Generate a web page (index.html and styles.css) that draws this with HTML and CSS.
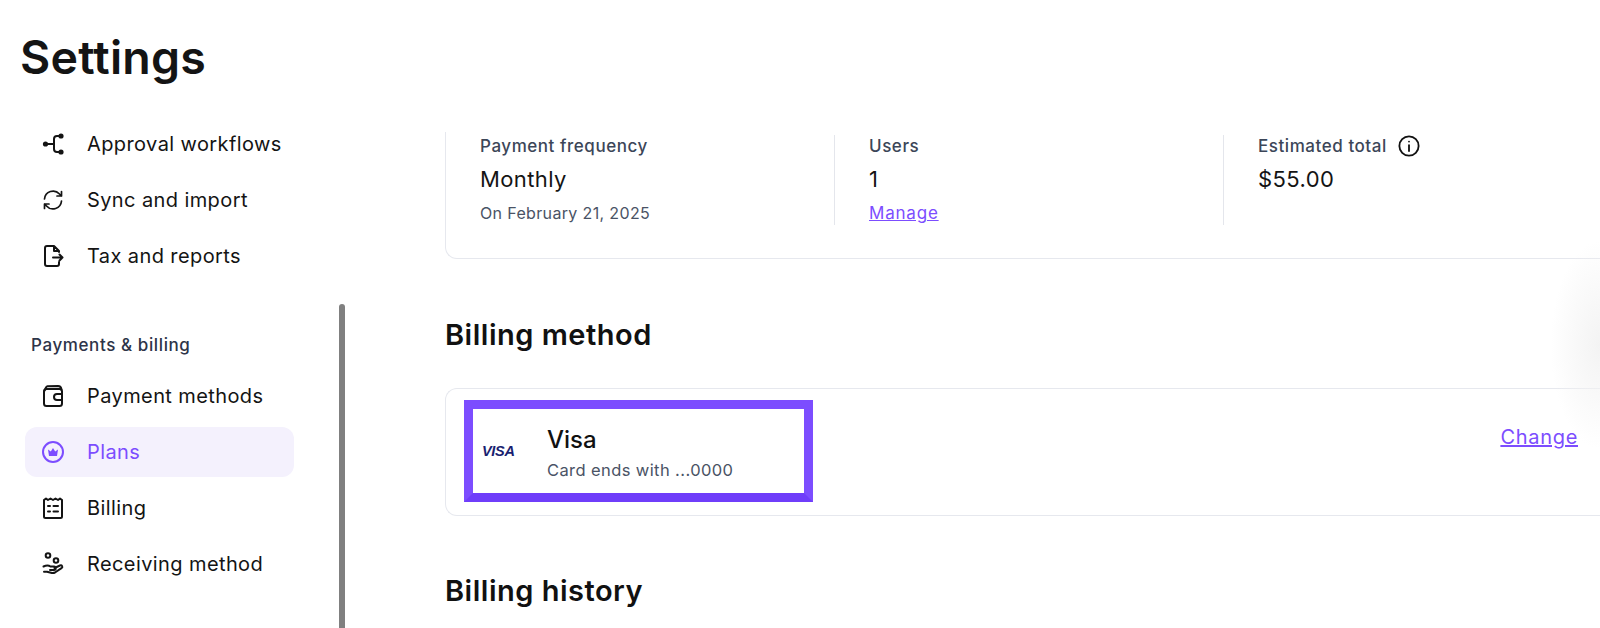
FILE: index.html
```html
<!DOCTYPE html>
<html lang="en">
<head>
  <meta charset="UTF-8" />
  <meta name="viewport" content="width=device-width, initial-scale=1.0"/>
  <title>Settings</title>
  <link rel="stylesheet" href="styles.css">
</head>
<body>
  <h1 class="page-title">Settings</h1>
  <div class="layout">
    <aside class="sidebar">
      <nav class="nav-group">
        <a class="nav-item">
          <svg class="nav-icon" viewBox="0 0 24 24"><circle cx="4.500" cy="12" r="2.600" class="solid"/><circle cx="20" cy="4" r="2.600" class="solid"/><circle cx="20" cy="20" r="2.600" class="solid"/><path d="M5 12h8M20 4h-4a3 3 0 0 0-3 3v10a3 3 0 0 0 3 3h4"/></svg>
          Approval workflows
        </a>
        <a class="nav-item">
          <svg class="nav-icon thin" viewBox="0 0 24 24"><path d="M3.500 11a8.600 8.600 0 0 1 15-5l2 2M20.500 3.500V8H16M20.500 13a8.600 8.600 0 0 1-15 5l-2-2M3.500 20.500V16H8"/></svg>
          Sync and import
        </a>
        <a class="nav-item">
          <svg class="nav-icon" viewBox="0 0 24 24"><path d="M18 8V7l-5-5H6a2 2 0 0 0-2 2v16a2 2 0 0 0 2 2h10a2 2 0 0 0 2-2v-2M13 2v5h5M12 13.500h9.500M18.500 10.500l3 3-3 3"/></svg>
          Tax and reports
        </a>
      </nav>

      <p class="nav-heading">Payments &amp; billing</p>
      <nav class="nav-group">
        <a class="nav-item">
          <svg class="nav-icon" viewBox="0 0 24 24"><rect x="3" y="5" width="18" height="17" rx="2.500"/><path d="M3.500 6.500 5 3.500q.3-1 1.500-1.200L17 2q3 0 3.500 3.500M21 10h-5a3 3 0 0 0 0 6h5"/></svg>
          Payment methods
        </a>
        <a class="nav-item active">
          <svg class="nav-icon" viewBox="0 0 24 24"><circle cx="12" cy="12" r="10"/><path class="solid" d="M7 9.500l2.800 2L12 8l2.200 3.500 2.800-2-1 6.500H8z"/></svg>
          Plans
        </a>
        <a class="nav-item">
          <svg class="nav-icon" viewBox="0 0 24 24"><path d="M3 4v16.500q0 1.500 1.500 1.500h15q1.500 0 1.500-1.500V4M3 4l2-1.500L7 4l2.500-1.500L12 4l2.500-1.500L17 4l2-1.500L21 4M7 10h2M7 15.500h2M12.500 10H17M12.500 15.500H17"/></svg>
          Billing
        </a>
        <a class="nav-item">
          <svg class="nav-icon" viewBox="0 0 24 24"><circle cx="7" cy="3.500" r="2.300"/><circle cx="15" cy="8.500" r="2.300"/><path d="M2.500 14.500c3-1.500 5-1.500 7 0h3.500a1.500 1.500 0 0 1 0 3.500H9M13.500 16l5.500-2.500c2-.7 3.200 1.500 1.500 2.700L14 20.500q-1.500.8-3 .5l-5-1.300H3"/></svg>
          Receiving method
        </a>
      </nav>
      <div class="scroll-thumb"></div>
    </aside>

    <main class="content">
      <section class="card summary">
        <div class="stat">
          <div class="stat-label">Payment frequency</div>
          <div class="stat-value">Monthly</div>
          <div class="stat-note">On February 21, 2025</div>
        </div>
        <div class="stat">
          <div class="stat-label">Users</div>
          <div class="stat-value">1</div>
          <a class="stat-link">Manage</a>
        </div>
        <div class="stat">
          <div class="stat-label">Estimated total
            <svg class="info-icon" viewBox="0 0 24 24"><circle cx="12" cy="12" r="10.500"/><path d="M12 11v6.500"/><circle cx="12" cy="7.200" r="1" class="solid"/></svg>
          </div>
          <div class="stat-value">$55.00</div>
        </div>
      </section>

      <h2 class="section-title">Billing method</h2>
      <section class="card method">
        <div class="method-box">
          <span class="visa-logo">VISA</span>
          <div class="method-text">
            <div class="method-name">Visa</div>
            <div class="method-note">Card ends with ...0000</div>
          </div>
        </div>
        <a class="change-link">Change</a>
      </section>

      <h2 class="section-title history">Billing history</h2>
    </main>
  </div>
  <div class="edge-shade"></div>
</body>
</html>
```

FILE: styles.css
```css
html, body { height: 100%; }
body { font-family: Inter, "Liberation Sans", sans-serif; background: #fff; color: #111; margin: 0; height: 628px; overflow: hidden; position: relative; }
a { cursor: pointer; }

.page-title { font-size: 46.500px; font-weight: 600; line-height: 56px; margin: 0; padding: 29px 20px 0; letter-spacing: 0.2px; color: #141414; }

.layout { display: flex; }
.sidebar { width: 339px; height: 543px; flex: none; position: relative; padding: 34px 0 0 25px; box-sizing: border-box; }
.nav-group { display: flex; flex-direction: column; width: 269px; gap: 6px; }
.nav-item { display: flex; align-items: center; gap: 22px; height: 50px; padding-left: 16px; border-radius: 12px; font-size: 20px; letter-spacing: 0.4px; color: #141414; }
.nav-item.active { background: #f4f1fd; color: #7c4dff; }
.nav-icon { width: 24px; height: 24px; flex: none; fill: none; stroke: currentColor; stroke-width: 2; stroke-linecap: round; stroke-linejoin: round; }
.nav-icon.thin { stroke-width: 1.700; }
.nav-icon .solid { fill: currentColor; stroke: none; }
.nav-heading { margin: 53px 0 15px 6px; font-size: 17px; line-height: 22px; font-weight: 500; letter-spacing: 0.6px; color: #2d3448; }
.scroll-thumb { position: absolute; top: 219px; right: -6px; width: 6px; height: 340px; background: #808080; border-radius: 3px 3px 0 0; }

.content { flex: 1; padding: 47px 0 0 106px; min-width: 0; }
.card { border: 1px solid #e6e8ee; border-right: none; border-radius: 12px 0 0 12px; background: #fff; }

.summary { display: flex; border-top: none; border-radius: 0 0 0 12px; height: 127px; padding-top: 3px; box-sizing: border-box; }
.stat { width: 389px; height: 90px; padding-left: 34px; box-sizing: border-box; border-left: 1px solid #e4e6ec; flex: none; }
.stat:first-child { width: 388px; padding-left: 34px; border-left: none; }
.stat-label { display: flex; align-items: center; height: 22px; font-size: 17px; font-weight: 500; letter-spacing: 0.55px; color: #3c4658; gap: 11px; }
.stat-value { font-size: 22px; line-height: 30px; margin-top: 7px; letter-spacing: 0.4px; color: #141414; }
.stat-note { font-size: 16px; line-height: 22px; margin-top: 8px; letter-spacing: 0.35px; color: #4a5365; }
.stat-link { display: block; font-size: 17px; line-height: 22px; margin-top: 8px; letter-spacing: 0.8px; color: #7c4dff; text-decoration: underline; }
.info-icon { width: 22px; height: 22px; fill: none; stroke: #111; stroke-width: 2; stroke-linecap: round; }
.info-icon .solid { fill: #111; stroke: none; }

.section-title { font-size: 29px; font-weight: 600; line-height: 36px; letter-spacing: 0.5px; margin: 58px 0 35px; color: #111; }
.section-title.history { margin: 57px 0 0; }

.method { display: flex; align-items: center; justify-content: space-between; height: 128px; padding: 0 22px 0 18px; box-sizing: border-box; }
.method-box { display: flex; align-items: center; width: 349px; height: 102px; border: 9px solid #7c4dff; border-bottom-color: #6f3dfa; box-sizing: border-box; padding-left: 9px; margin-top: -3px; }
.visa-logo { width: 65px; flex: none; font-family: "Liberation Sans", sans-serif; font-weight: 700; font-style: italic; font-size: 14.500px; letter-spacing: -0.3px; color: #1a1f71; }
.method-text { padding-top: 5px; }
.method-name { font-size: 24px; line-height: 30px; font-weight: 500; color: #111; }
.method-note { font-size: 16.500px; line-height: 22px; margin-top: 4px; letter-spacing: 0.4px; color: #4a5365; }
.change-link { font-size: 20px; letter-spacing: 0.7px; color: #7c4dff; text-decoration: underline; margin-top: -31px; }

.edge-shade { position: absolute; top: 240px; right: 0; width: 50px; height: 210px; background: radial-gradient(ellipse at right center, #f3f3f3, rgba(255,255,255,0) 70%); pointer-events: none; }
```
